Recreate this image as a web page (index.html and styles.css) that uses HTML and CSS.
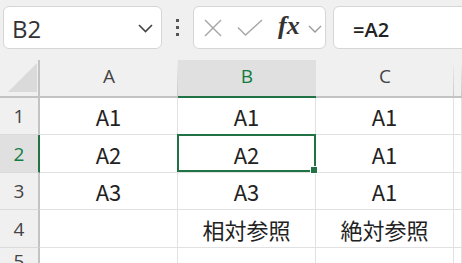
FILE: index.html
```html
<!doctype html>
<html>

<head>
  <title>Sheet</title>
  <link rel="stylesheet" href="styles.css">
</head>

<body>
  <div class="toolbar">
    <div class="namebox">
      <span>B2</span>
      <svg class="chev" width="15" height="9" viewBox="0 0 15 9"><polyline points="1,1 7.5,7.5 14,1" fill="none" stroke="#444" stroke-width="1.6"/></svg>
    </div>
    <div class="dots"><i></i><i></i><i></i></div>
    <div class="fxbox">
      <svg class="ico" width="20" height="18" viewBox="0 0 20 18"><path d="M2 1 L18 17 M18 1 L2 17" stroke="#a8a8a8" stroke-width="1.5" fill="none"/></svg>
      <svg class="ico" width="26" height="17" viewBox="0 0 26 17"><polyline points="1,8.5 8.5,16 25,1" stroke="#a8a8a8" stroke-width="1.5" fill="none"/></svg>
      <span class="fx">fx</span>
      <svg class="chev-sm" width="14" height="8" viewBox="0 0 14 8"><polyline points="1,1 7,7 13,1" fill="none" stroke="#9a9a9a" stroke-width="1.4"/></svg>
    </div>
    <div class="formula">=A2</div>
  </div>

  <div class="sheet">
    <!-- header row -->
    <div class="corner">
      <svg width="30" height="29" viewBox="0 0 30 29"><polygon points="0,29 29,0 29,29" fill="#dadada"/></svg>
    </div>
    <div class="colhead">A</div>
    <div class="colhead active">B</div>
    <div class="colhead">C</div>
    <div class="colhead"></div>

    <!-- row 1 -->
    <div class="rowhead">1</div>
    <div class="cell">A1</div>
    <div class="cell">A1</div>
    <div class="cell">A1</div>
    <div class="cell"></div>

    <!-- row 2 -->
    <div class="rowhead active">2</div>
    <div class="cell">A2</div>
    <div class="cell current">A2<div class="selection"><span class="handle"></span></div></div>
    <div class="cell">A1</div>
    <div class="cell"></div>

    <!-- row 3 -->
    <div class="rowhead">3</div>
    <div class="cell">A3</div>
    <div class="cell">A3</div>
    <div class="cell">A1</div>
    <div class="cell"></div>

    <!-- row 4 -->
    <div class="rowhead">4</div>
    <div class="cell"></div>
    <div class="cell">相対参照</div>
    <div class="cell">絶対参照</div>
    <div class="cell"></div>

    <!-- row 5 -->
    <div class="rowhead">5</div>
    <div class="cell"></div>
    <div class="cell"></div>
    <div class="cell"></div>
    <div class="cell"></div>
  </div>
</body>

</html>
```

FILE: styles.css
```css
* {
  box-sizing: border-box;
}

html,
body {
  margin: 0;
  height: 100%;
  overflow: hidden;
  background-color: #fff;
}

body {
  font-family: "Open Sans", "Noto Sans", sans-serif;
  color: #222;
}

/* formula bar */
.toolbar {
  display: flex;
  height: 60px;
  padding: 6px 0 11px 3px;
  background-color: #f0f0f0;
}

.namebox {
  width: 159px;
  display: flex;
  align-items: center;
  justify-content: space-between;
  padding: 2px 8px 0 8px;
  background-color: #fff;
  border: 1px solid #d6d6d6;
  border-radius: 6px;
  font-size: 24px;
  color: #333;
}

.dots {
  width: 31px;
  display: flex;
  flex-direction: column;
  align-items: center;
  justify-content: center;
  gap: 4px;
}

.dots i {
  width: 3px;
  height: 3px;
  background-color: #555;
}

.fxbox {
  width: 133px;
  display: flex;
  align-items: center;
  padding: 0 0 0 9px;
  background-color: #fff;
  border: 1px solid #d6d6d6;
  border-radius: 6px;
}

.fxbox .ico {
  margin-right: 14px;
}

.fxbox .ico + .ico {
  margin-right: 15px;
}

.fx {
  font-family: "Liberation Serif", "DejaVu Serif", serif;
  font-style: italic;
  font-weight: bold;
  font-size: 26px;
  color: #333;
  margin-right: 8px;
  margin-top: -3px;
}

.chev-sm {
  margin-top: 2px;
}

.formula {
  flex: 1;
  margin-left: 7px;
  margin-right: -10px;
  display: flex;
  align-items: center;
  padding: 4px 0 0 19px;
  background-color: #fff;
  border: 1px solid #d6d6d6;
  border-radius: 6px;
  font-size: 20px;
  font-weight: 600;
  color: #222;
}

/* sheet grid */
.sheet {
  display: grid;
  grid-template-columns: 40px 138px 138px 138px 1fr;
  grid-template-rows: 38px 37px 38px 37px 38px 1fr;
  height: calc(100% - 60px);
}

.corner {
  display: flex;
  align-items: flex-end;
  padding: 0 0 4px 8px;
  background-color: #f0f0f0;
  border-right: 2px solid #c3c3c3;
  border-bottom: 2px solid #c3c3c3;
}

.colhead {
  display: flex;
  align-items: center;
  justify-content: center;
  padding-bottom: 5px;
  font-size: 19px;
  color: #444;
  background: linear-gradient(to bottom, rgba(200, 200, 200, 0), #c8c8c8) right / 1px 100% no-repeat, #f0f0f0;
  border-bottom: 2px solid #c3c3c3;
}

.colhead.active {
  background: #e0e0e0;
  color: #107c41;
  border-bottom-color: #217346;
}

.rowhead {
  display: flex;
  align-items: center;
  justify-content: center;
  font-size: 19px;
  color: #444;
  background-color: #f0f0f0;
  border-right: 2px solid #c3c3c3;
  border-bottom: 1px solid #dadada;
}

.rowhead.active {
  background-color: #e0e0e0;
  color: #107c41;
  border-right-color: #217346;
}

.cell {
  display: flex;
  align-items: center;
  justify-content: center;
  font-family: "Noto Sans CJK JP", "Noto Sans", sans-serif;
  font-size: 22px;
  color: #222;
  border-right: 1px solid #e1e1e1;
  border-bottom: 1px solid #e1e1e1;
}

.cell.current {
  position: relative;
}

.selection {
  position: absolute;
  top: -1px;
  left: -1px;
  right: -1px;
  bottom: 0;
  border: 2px solid #217346;
}

.handle {
  position: absolute;
  right: -4px;
  bottom: -4px;
  width: 8px;
  height: 8px;
  background-color: #217346;
  border: 1px solid #fff;
}
```
